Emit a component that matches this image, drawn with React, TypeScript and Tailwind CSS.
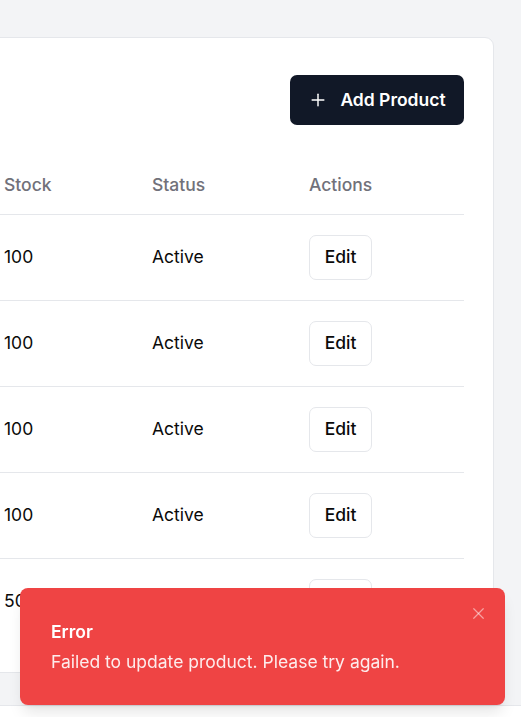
import { Plus, X } from 'lucide-react';

const rows = [
  { stock: 100, status: 'Active' },
  { stock: 100, status: 'Active' },
  { stock: 100, status: 'Active' },
  { stock: 100, status: 'Active' },
  { stock: 50, status: 'Active' },
];

export default function App() {
  return (
    <div className="min-h-screen flex flex-col bg-white font-['Inter',sans-serif] text-[#0a0a0a] overflow-hidden">
      <main className="bg-gray-100 pt-[37px] pb-[32px] pr-[27px] flex justify-end">
        <div className="w-[536px] shrink-0 bg-white border border-gray-200 rounded-[9px] pt-[37px] pb-[28px] pr-[29px] pl-[29px]">
          <div className="flex justify-end">
            <button className="h-[50px] w-[174px] flex items-center justify-center gap-[12px] rounded-[7px] bg-[#111827] text-white text-[17.5px] font-semibold">
              <Plus className="w-[20px] h-[20px]" strokeWidth={1.75} />
              Add Product
            </button>
          </div>

          <table className="mt-[31px] w-full table-fixed border-collapse text-[17.5px]">
            <colgroup>
              <col className="w-[148px]" />
              <col className="w-[157px]" />
              <col />
            </colgroup>
            <thead>
              <tr className="border-b border-gray-200">
                <th className="h-[58px] px-[16px] text-left font-medium text-[#71717a]">Stock</th>
                <th className="h-[58px] px-[16px] text-left font-medium text-[#71717a]">Status</th>
                <th className="h-[58px] px-[16px] text-left font-medium text-[#71717a]">Actions</th>
              </tr>
            </thead>
            <tbody>
              {rows.map((r, i) => (
                <tr key={i} className="border-b border-gray-200 last:border-0">
                  <td className="h-[86px] px-[16px]">{r.stock}</td>
                  <td className="h-[86px] px-[16px]">{r.status}</td>
                  <td className="h-[86px] px-[16px]">
                    <button className="h-[45px] w-[63px] rounded-[7px] border border-gray-200 bg-white font-medium text-[17.5px]">
                      Edit
                    </button>
                  </td>
                </tr>
              ))}
            </tbody>
          </table>
        </div>
      </main>

      <footer className="h-[80px] border-t border-gray-200 bg-white" />

      <div className="fixed right-[16px] bottom-[12px] w-[485px] rounded-[8px] bg-[#ef4444] text-white shadow-lg pl-[31px] pr-[40px] pt-[32px] pb-[31px]">
        <div className="text-[17.5px] font-semibold leading-[24px]">Error</div>
        <div className="mt-[6px] text-[17.5px] leading-[24px] opacity-90">
          Failed to update product. Please try again.
        </div>
        <button className="absolute right-[17px] top-[16px] text-white/50">
          <X className="w-[19px] h-[19px]" strokeWidth={1.5} />
        </button>
      </div>
    </div>
  );
}
